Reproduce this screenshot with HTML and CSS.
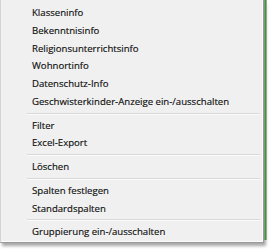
FILE: index.html
```html
<!DOCTYPE html>
<html>
<head>
<meta charset="utf-8">
<link rel="stylesheet" href="styles.css">
</head>
<body>
<div class="screen">
  <div class="menu">
    <div class="item">Klasseninfo</div>
    <div class="item">Bekenntnisinfo</div>
    <div class="item">Religionsunterrichtsinfo</div>
    <div class="item">Wohnortinfo</div>
    <div class="item">Datenschutz-Info</div>
    <div class="item">Geschwisterkinder-Anzeige ein-/ausschalten</div>
    <div class="sep"></div>
    <div class="item">Filter</div>
    <div class="item">Excel-Export</div>
    <div class="sep"></div>
    <div class="item">Löschen</div>
    <div class="sep"></div>
    <div class="item">Spalten festlegen</div>
    <div class="item">Standardspalten</div>
    <div class="sep"></div>
    <div class="item">Gruppierung ein-/ausschalten</div>
  </div>
  <div class="behind"></div>
</div>
</body>
</html>
```
FILE: styles.css
```css
html, body {
  margin: 0;
  padding: 0;
  background: #ffffff;
}
.screen {
  display: flex;
  align-items: flex-start;
  width: 272px;
  height: 250px;
}
.menu {
  box-sizing: border-box;
  width: 264px;
  height: 243px;
  padding: 4px 3px 1px 1px;
  background: #f0f0f0;
  border-left: 1px solid #d4d4d4;
  border-right: 1px solid #9a9a9a;
  border-bottom: 1px solid #9a9a9a;
  box-shadow: inset -1px -1px 0 #fbfbfb, 2px 3px 3px rgba(0,0,0,0.35);
  font-family: "Open Sans", "Noto Sans", sans-serif;
  font-size: 9.6px;
  color: #0e0e0e;
  display: flex;
  flex-direction: column;
}
.item {
  height: 17.75px;
  line-height: 17.75px;
  padding-left: 30px;
  white-space: nowrap;
  -webkit-text-stroke: 0.15px #0e0e0e;
}
.sep {
  height: 6px;
  margin-left: 25px;
  display: flex;
  flex-direction: column;
  justify-content: center;
}
.sep::before {
  content: "";
  display: block;
  height: 1px;
  background: #d9d9d9;
  border-bottom: 1px solid #fbfbfb;
}
.behind {
  width: 3px;
  height: 240px;
  background: linear-gradient(90deg, #7fb07f, #4e8a4e 50%, #a8c8a0);
}
```
